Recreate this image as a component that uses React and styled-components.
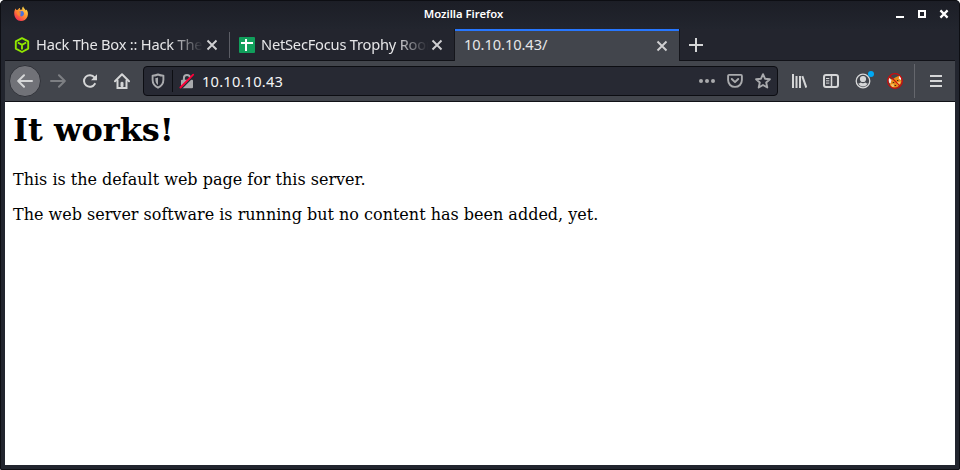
import React from "react";
import styled, { createGlobalStyle } from "styled-components";

const GlobalStyle = createGlobalStyle`
  * { box-sizing: border-box; }
  body { margin: 0; background: #fff; overflow: hidden; }
`;

const Window = styled.div`
  width: 960px;
  height: 470px;
  display: flex;
  flex-direction: column;
  padding: 1px 5px 5px;
  background: #22252e;
  border-radius: 5px 5px 2px 2px;
  box-shadow: inset 0 0 0 1px #0d0e13;
  overflow: hidden;
  font-family: "Noto Sans", sans-serif;
`;

const TitleBar = styled.header`
  height: 28px;
  flex: none;
  margin: 0 -4px;
  padding: 0 9px 2px;
  display: grid;
  grid-template-columns: 27px 1fr 60px;
  align-items: center;
  background: linear-gradient(#1c1e26, #22252e);
  border-radius: 4px 4px 0 0;
`;

const AppLogo = styled.span`
  display: flex;
  padding-left: 3px;
`;

const WindowTitle = styled.div`
  text-align: center;
  font-size: 11.25px;
  line-height: 16px;
  font-weight: 600;
  color: #fff;
  white-space: nowrap;
`;

const WindowControls = styled.div`
  display: flex;
  gap: 10px;
  justify-content: flex-end;
`;

const TabStrip = styled.nav`
  height: 32px;
  flex: none;
  display: flex;
  background: #23252e;
  border-bottom: 1px solid #111218;
`;

const Tab = styled.div`
  width: ${(p) => p.$width}px;
  height: ${(p) => (p.$active ? 32 : 31)}px;
  flex: none;
  display: flex;
  align-items: center;
  padding: 1px ${(p) => (p.$divided || p.$active ? 11 : 12)}px 0 9px;
  background: ${(p) => (p.$active ? "#42454c" : "transparent")};
  box-shadow: ${(p) => (p.$active ? "-1px 0 #15161c, 1px 0 #15161c, inset 0 2px #2777ff" : "none")};
  border-right: ${(p) => (p.$divided ? "1px solid transparent" : "0")};
  border-image: ${(p) =>
    p.$divided ? "linear-gradient(transparent 4px, #5b5d65 4px 28px, transparent 28px) 1" : "none"};
`;

const TabLabel = styled.span`
  flex: 1;
  margin: 0 ${(p) => (p.$flush ? 0 : 3)}px 3px ${(p) => (p.$flush ? 0 : 6)}px;
  overflow: hidden;
  white-space: nowrap;
  font-size: 14.67px;
  line-height: 20px;
  letter-spacing: ${(p) => (p.$fade ? "-0.22px" : "-0.08px")};
  color: #e6e6e8;
  mask-image: ${(p) => (p.$fade ? "linear-gradient(to left, transparent, #000 32px)" : "none")};
`;

const NewTab = styled.div`
  width: 34px;
  display: flex;
  align-items: center;
  justify-content: center;
  color: #d5d6d7;
`;

const Toolbar = styled.div`
  height: 41px;
  flex: none;
  display: flex;
  align-items: center;
  background: #42454c;
  border-bottom: 1px solid #101116;
  padding: 0 3px 0 4px;
`;

const ToolButton = styled.span`
  width: 32px;
  height: 32px;
  flex: none;
  display: flex;
  align-items: center;
  justify-content: center;
  color: #d5d6d7;
  opacity: ${(p) => (p.$disabled ? 0.4 : 1)};
`;

const BackButton = styled(ToolButton)`
  border-radius: 50%;
  border: 1px solid #303239;
  background: #717278;
  margin-right: 1px;
`;

const AddressBar = styled.div`
  width: 635px;
  height: 30px;
  flex: none;
  margin: 0 5px;
  display: flex;
  align-items: center;
  border: 1px solid #0c0d12;
  border-radius: 4px;
  background: #272933;
`;

const AddressIcon = styled.span`
  width: 28px;
  flex: none;
  display: flex;
  justify-content: center;
  color: #a9aaad;
`;

const AddressDivider = styled.span`
  width: 1px;
  height: 22px;
  background: #0d0e13;
`;

const Address = styled.span`
  flex: 1;
  margin-left: 1px;
  padding-bottom: 1px;
  font-size: 14.67px;
  line-height: 20px;
  letter-spacing: 0.2px;
  color: #f4f4f5;
`;

const ToolDivider = styled.span`
  width: 1px;
  height: 34px;
  margin: 0 5px 0 3px;
  background: #65676d;
`;

const Page = styled.main`
  flex: 1;
  min-height: 0;
  background: #fff;
  color: #000;
  padding: 9px 8px 8px;
  font-family: "DejaVu Serif", serif;
  font-size: 16px;
  line-height: 19px;
`;

const Heading = styled.h1`
  margin: 0 0 21px;
  font-size: 32px;
  line-height: 38px;
  font-weight: bold;
`;

const Paragraph = styled.p`
  margin: 0 0 16px;
`;

function Icon({ size = 16, sw = 2, children }) {
  return (
    <svg
      width={size}
      height={size}
      viewBox="0 0 16 16"
      fill="none"
      stroke="currentColor"
      strokeWidth={sw}
      strokeLinecap="round"
      strokeLinejoin="round"
    >
      {children}
    </svg>
  );
}

const FirefoxLogo = () => (
  <svg width="16" height="16" viewBox="0 0 16 16">
    <defs>
      <linearGradient id="flame" x1="0.85" y1="0.1" x2="0.2" y2="0.95">
        <stop offset="0" stopColor="#ffe04b" />
        <stop offset="0.45" stopColor="#ff9130" />
        <stop offset="1" stopColor="#f52b55" />
      </linearGradient>
    </defs>
    <path d="M1.2 7C1.1 5 1.9 3.3 2.8 2.4l.5 1.7 1.5-.3C5.8 2.4 6.4 2 7 2l-.2 1.7 2.6-.1C8.8 2 9.4 1.1 10.3.5c.2 1.8 1.7 2.4 2.6 4l.5-1.1C15 5.3 15.4 8 14.4 10.7 13.3 13.5 10.8 15 8 15c-4 0-6.8-3.3-6.8-8Z" fill="url(#flame)" />
    <path d="M5.1 6.2 7 5.5 9.6 5c1.3 1.2 1.8 2.7 1 4.1-.8 1.5-3.2 1.8-4.4.5l1.9-1.3-3-.6Z" fill="#4870dc" />
    <path d="M3.6 6.1c.9-.7 2-.4 3 .2l1.6.3-.3 1-1.7.5c.3 1 1 1.7 2 1.9-2.1.7-4.4-.4-4.6-3.9Z" fill="#ff852d" />
  </svg>
);

const CubeIcon = () => (
  <svg width="16" height="16" viewBox="0 0 16 16" fill="none" stroke="#90e500" strokeWidth="1.9" strokeLinejoin="round">
    <path d="m8 1.1 6.2 3.3v7.2L8 15l-6.2-3.4V4.4ZM3.8 5.5 8 7.8l4.2-2.3M8 7.8v4.8" />
  </svg>
);

const SheetIcon = () => (
  <svg width="16" height="16" viewBox="0 0 16 16">
    <rect width="16" height="16" rx="1" fill="#119f5c" />
    <path d="M7 2v12M2 6h12" stroke="#fff" strokeWidth="2" />
  </svg>
);

const CloseIcon = () => (
  <svg width="12" height="12" viewBox="0 0 12 12" fill="none" stroke="#d0d0d2" strokeWidth="1.9">
    <path d="m1.5 1.5 9 9m0-9-9 9" />
  </svg>
);

const ReloadIcon = () => (
  <Icon>
    <path d="M12.8 10.9A5.8 5.8 0 1 1 12.4 4.4" />
    <path d="M15 1.3v6H9Z" fill="currentColor" stroke="none" />
  </Icon>
);

const HomeIcon = () => (
  <Icon>
    <path d="m1 8.2 7-7 7 7" />
    <path d="M3.5 7.5V15h9V7.5" strokeLinejoin="miter" />
    <path d="M7 13.2V9.4h2v3.8Z" strokeWidth="1" fill="currentColor" />
  </Icon>
);

const ShieldIcon = () => (
  <Icon sw={1.9}>
    <path d="M8 1.5c2 .8 3.7 1.1 5.4 1.1v4.1c0 3.9-2 6.3-5.4 8-3.4-1.7-5.4-4.1-5.4-8V2.6c1.7 0 3.4-.3 5.4-1.1Z" />
    <path d="M8 4.4c-1 .4-1.8.5-2.6.6v2c0 2.3.8 3.7 2.6 4.9Z" fill="currentColor" stroke="none" />
  </Icon>
);

const InsecureIcon = () => (
  <Icon>
    <path d="M4.9 7V5a3.1 3.1 0 0 1 6.2 0v2" strokeWidth="2" />
    <rect x="2" y="6.7" width="12" height="8.6" rx="1" fill="currentColor" stroke="none" />
    <path d="M2.4 15.4 15 2.8" stroke="#272933" strokeWidth="1.6" strokeLinecap="butt" />
    <path d="M1.4 14.5 14.2 1.7" stroke="#ff0039" strokeWidth="1.8" />
  </Icon>
);

const PocketIcon = () => (
  <Icon>
    <path d="M2.1 1.9h11.8c.6 0 1 .4 1 1v4.2c0 4-3 6.8-6.9 6.8S1.1 11.1 1.1 7.1V2.9c0-.6.4-1 1-1Z" strokeWidth="1.9" />
    <path d="M4.8 6 8 9.1 11.2 6" />
  </Icon>
);

const StarIcon = () => (
  <Icon>
    <path d="m8 1.2 2 4.5 4.9.5-3.7 3.3 1.1 5L8 12l-4.3 2.5 1.1-5L1.1 6.2 6 5.7Z" strokeWidth="1.9" />
  </Icon>
);

const LibraryIcon = () => (
  <Icon>
    <path d="M2 1v14M5.5 3v12M9 3v12M11.3 3.2 15.3 14.6" strokeWidth="2" strokeLinecap="butt" />
  </Icon>
);

const SidebarIcon = () => (
  <Icon>
    <rect x="1" y="2" width="14" height="12" rx="2" />
    <path d="M8.5 2v12" strokeWidth="1.5" />
    <path d="M3 5.5h3.3M3 7.8h3.3M3 10.1h3.3" strokeWidth="1" strokeLinecap="butt" />
  </Icon>
);

const AccountWrap = styled.span`
  position: relative;
  display: flex;
`;

const AccountDot = styled.i`
  position: absolute;
  top: -2px;
  right: -3px;
  width: 6px;
  height: 6px;
  border-radius: 50%;
  background: #00a9f4;
`;

const AccountIcon = () => (
  <AccountWrap>
    <Icon>
      <circle cx="8" cy="8" r="6.8" strokeWidth="1.3" />
      <circle cx="8" cy="6" r="3.1" fill="currentColor" stroke="none" />
      <path d="M3.3 10.5c1 .1 1.6-.4 2.4-1 1.4 1 3.2 1 4.6 0 .8.6 1.4 1.1 2.4 1-1 1.9-2.7 2.9-4.7 2.9s-3.7-1-4.7-2.9Z" fill="currentColor" stroke="none" />
    </Icon>
    <AccountDot />
  </AccountWrap>
);

const FoxIcon = () => (
  <svg width="16" height="16" viewBox="0 0 16 16" fill="none">
    <path d="m1 4.2 4.2 2.2 3-2 4.8-2.2 1 3.6.8 3-2 3.8-3.2 1.8-3 .6-2.8-1L2.8 11Z" fill="#e98a17" />
    <path d="m.9 4.3 3.6 2.8-.9 3.3L2 9.6ZM12.6 2.3l1.2 1.8.5 3.2-2.6-1.8Z" fill="#f6ece8" />
    <path d="m3.4 11.8 3-1 1 2.8-2 .7Zm6-2.2 4.4-1.1-1.2 2.8-2.2.7Z" fill="#f4c265" />
    <path d="M5.8 9h1.4v1.1H5.8zM10 7h1.3v1.1H10zM7.6 12h1.5v1H7.6z" fill="#422a19" />
    <circle cx="8" cy="8" r="7.3" stroke="#cf0c0c" strokeWidth="1.3" />
    <path d="m2.9 2.9 10.2 10.2" stroke="#cf0c0c" strokeWidth="1.2" />
  </svg>
);

export default function App() {
  return (
    <>
      <GlobalStyle />
      <Window>
        <TitleBar>
          <AppLogo><FirefoxLogo /></AppLogo>
          <WindowTitle>Mozilla Firefox</WindowTitle>
          <WindowControls>
            <svg width="12" height="12" stroke="#fff" strokeWidth="2"><path d="M2 9h8" /></svg>
            <svg width="12" height="12" stroke="#fff" strokeWidth="2" fill="none"><path d="M3 3h6v6H3Z" /></svg>
            <svg width="12" height="12" stroke="#fff" strokeWidth="2.2"><path d="m2.4 2.4 7.2 7.2m0-7.2L2.4 9.6" /></svg>
          </WindowControls>
        </TitleBar>
        <TabStrip>
          <Tab $width={225} $divided>
            <CubeIcon /><TabLabel $fade>Hack The Box :: Hack The Box</TabLabel><CloseIcon />
          </Tab>
          <Tab $width={225}>
            <SheetIcon /><TabLabel $fade>NetSecFocus Trophy Room</TabLabel><CloseIcon />
          </Tab>
          <Tab $width={224} $active>
            <TabLabel $flush>10.10.10.43/</TabLabel><CloseIcon />
          </Tab>
          <NewTab>
            <Icon><path d="M8 1v14M1 8h14" strokeLinecap="butt" /></Icon>
          </NewTab>
        </TabStrip>
        <Toolbar>
          <BackButton><Icon><path d="M15 8H1.3M7 2.2 1.2 8 7 13.8" /></Icon></BackButton>
          <ToolButton $disabled><Icon><path d="M1 8h13.7M9 2.2 14.8 8 9 13.8" /></Icon></ToolButton>
          <ToolButton><ReloadIcon /></ToolButton>
          <ToolButton><HomeIcon /></ToolButton>
          <AddressBar>
            <AddressIcon><ShieldIcon /></AddressIcon>
            <AddressDivider />
            <AddressIcon><InsecureIcon /></AddressIcon>
            <Address>10.10.10.43</Address>
            <AddressIcon>
              <Icon><g fill="currentColor" stroke="none"><circle cx="2" cy="8" r="2" /><circle cx="8" cy="8" r="2" /><circle cx="14" cy="8" r="2" /></g></Icon>
            </AddressIcon>
            <AddressIcon><PocketIcon /></AddressIcon>
            <AddressIcon><StarIcon /></AddressIcon>
          </AddressBar>
          <ToolButton><LibraryIcon /></ToolButton>
          <ToolButton><SidebarIcon /></ToolButton>
          <ToolButton><AccountIcon /></ToolButton>
          <ToolButton><FoxIcon /></ToolButton>
          <ToolDivider />
          <ToolButton><Icon><path d="M2 3h12M2 8h12M2 13h12" strokeLinecap="butt" /></Icon></ToolButton>
        </Toolbar>
        <Page>
          <Heading>It works!</Heading>
          <Paragraph>This is the default web page for this server.</Paragraph>
          <Paragraph>The web server software is running but no content has been added, yet.</Paragraph>
        </Page>
      </Window>
    </>
  );
}
